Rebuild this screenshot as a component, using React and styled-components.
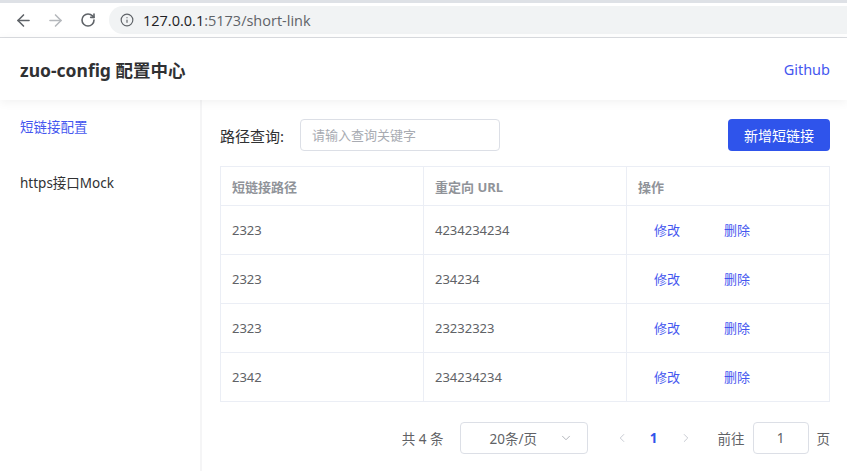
import React from "react";
import styled, { createGlobalStyle } from "styled-components";
import { ArrowLeft, ArrowRight, RotateCw, Info, ChevronDown, ChevronLeft, ChevronRight } from "lucide-react";

const Global = createGlobalStyle`
  html, body { margin: 0; padding: 0; background: #fff; overflow: hidden; }
  body { font-family: "Noto Sans", "Noto Sans CJK SC", sans-serif; }
  * { box-sizing: border-box; }
`;

const Page = styled.div`
  width: 847px;
  height: 471px;
  display: flex;
  flex-direction: column;
  overflow: hidden;
`;

const TopStrip = styled.div`
  height: 3px;
  background: #dee1e6;
`;

const Toolbar = styled.div`
  height: 35px;
  display: flex;
  align-items: center;
  padding-left: 13px;
  border-bottom: 1px solid #dadce0;
  background: #fff;
`;

const NavIcon = styled.span`
  width: 20px;
  display: flex;
  justify-content: center;
  margin-right: ${(p) => p.$gap || 12}px;
  color: ${(p) => (p.$disabled ? "#b5b8bc" : "#5f6368")};
`;

const Omnibox = styled.div`
  flex: 1;
  height: 28px;
  margin-left: 1px;
  border-radius: 14px 0 0 14px;
  background: #f1f3f4;
  display: flex;
  align-items: center;
  padding-left: 11px;
  gap: 9px;
  font-family: "Open Sans", "Noto Sans", sans-serif;
  font-size: 14.5px;
  color: #5f6368;
`;

const Host = styled.span`
  color: #202124;
`;

const Header = styled.header`
  height: 62px;
  display: flex;
  align-items: center;
  justify-content: space-between;
  padding: 0 17px 0 20px;
  background: #fff;
  position: relative;
  z-index: 1;
  box-shadow: 0 2px 10px rgba(0, 0, 0, 0.06);
`;

const Title = styled.h1`
  margin: 0;
  font-size: 17.5px;
  font-weight: 700;
  color: #303133;
`;

const Link = styled.a`
  color: #4557ef;
  font-size: 14.5px;
  text-decoration: none;
`;

const Body = styled.div`
  flex: 1;
  display: flex;
  min-height: 0;
`;

const Sidebar = styled.nav`
  width: 202px;
  border-right: 2px solid #f5f5f6;
  display: flex;
  flex-direction: column;
`;

const MenuItem = styled.div`
  height: 56px;
  line-height: 54px;
  padding-left: 20px;
  font-size: 13.5px;
  color: ${(p) => (p.$active ? "#4557ef" : "#303133")};
`;

const Main = styled.main`
  flex: 1;
  padding: 19px 17px 0 18px;
  display: flex;
  flex-direction: column;
`;

const SearchRow = styled.div`
  display: flex;
  align-items: center;
  height: 32px;
`;

const Label = styled.label`
  font-size: 15px;
  color: #303133;
  margin-right: 16px;
`;

const Input = styled.input`
  width: 200px;
  height: 32px;
  border: 1px solid #dcdfe6;
  border-radius: 4px;
  padding: 0 11px;
  font-size: 13px;
  font-family: inherit;
  outline: none;
  color: #606266;
  &::placeholder { color: #a8abb2; }
`;

const PrimaryButton = styled.button`
  margin-left: auto;
  height: 32px;
  width: 102px;
  border: none;
  border-radius: 4px;
  background: #2f54eb;
  color: #fff;
  font-size: 14px;
  font-family: inherit;
`;

const Table = styled.table`
  margin-top: 15px;
  width: 610px;
  border-collapse: collapse;
  table-layout: fixed;
  font-size: 13px;
`;

const Th = styled.th`
  height: 39px;
  text-align: left;
  padding: 0 11px;
  border: 1px solid #ebeef5;
  color: #909399;
  font-weight: 700;
`;

const Td = styled.td`
  height: 49px;
  padding: 0 11px 1px;
  border: 1px solid #ebeef5;
  color: #606266;
`;

const Actions = styled.div`
  display: flex;
  padding-left: 16px;
  gap: 44px;
`;

const ActionLink = styled.span`
  color: #4557ef;
  font-size: 13px;
`;

const Pager = styled.div`
  margin-top: 20px;
  display: flex;
  align-items: center;
  justify-content: flex-end;
  height: 32px;
  font-size: 13.5px;
  color: #606266;
`;

const Total = styled.span`
  margin-right: 16px;
`;

const Select = styled.div`
  width: 128px;
  height: 32px;
  border: 1px solid #dcdfe6;
  border-radius: 4px;
  display: flex;
  align-items: center;
  padding: 0 14px 0 29px;
  justify-content: space-between;
  color: #606266;
  margin-right: 18px;
`;

const PageArrow = styled.span`
  width: 32px;
  display: flex;
  justify-content: center;
  color: #c0c4cc;
`;

const PageNum = styled.span`
  width: 32px;
  text-align: center;
  font-weight: 700;
  color: #2f54eb;
`;

const JumpText = styled.span`
  margin-left: ${(p) => p.$ml || 0}px;
  margin-right: ${(p) => p.$mr || 0}px;
`;

const JumpInput = styled.div`
  width: 56px;
  height: 32px;
  border: 1px solid #dcdfe6;
  border-radius: 4px;
  display: flex;
  align-items: center;
  justify-content: center;
  color: #606266;
`;

const rows = [
  ["2323", "4234234234"],
  ["2323", "234234"],
  ["2323", "23232323"],
  ["2342", "234234234"],
];

export default function App() {
  return (
    <Page>
      <Global />
      <TopStrip />
      <Toolbar>
        <NavIcon $gap={12}><ArrowLeft size={19} strokeWidth={2} /></NavIcon>
        <NavIcon $gap={13} $disabled><ArrowRight size={19} strokeWidth={2} /></NavIcon>
        <NavIcon $gap={10}><RotateCw size={16} strokeWidth={2.4} /></NavIcon>
        <Omnibox>
          <Info size={14} strokeWidth={2} color="#5f6368" />
          <span><Host>127.0.0.1</Host>:5173/short-link</span>
        </Omnibox>
      </Toolbar>
      <Header>
        <Title>zuo-config 配置中心</Title>
        <Link>Github</Link>
      </Header>
      <Body>
        <Sidebar>
          <MenuItem $active>短链接配置</MenuItem>
          <MenuItem>https接口Mock</MenuItem>
        </Sidebar>
        <Main>
          <SearchRow>
            <Label>路径查询:</Label>
            <Input placeholder="请输入查询关键字" />
            <PrimaryButton>新增短链接</PrimaryButton>
          </SearchRow>
          <Table>
            <thead>
              <tr>
                <Th>短链接路径</Th>
                <Th>重定向 URL</Th>
                <Th>操作</Th>
              </tr>
            </thead>
            <tbody>
              {rows.map((r, i) => (
                <tr key={i}>
                  <Td>{r[0]}</Td>
                  <Td>{r[1]}</Td>
                  <Td>
                    <Actions>
                      <ActionLink>修改</ActionLink>
                      <ActionLink>删除</ActionLink>
                    </Actions>
                  </Td>
                </tr>
              ))}
            </tbody>
          </Table>
          <Pager>
            <Total>共 4 条</Total>
            <Select>
              <span>20条/页</span>
              <ChevronDown size={14} color="#a8abb2" strokeWidth={1.5} />
            </Select>
            <PageArrow><ChevronLeft size={14} strokeWidth={1.5} /></PageArrow>
            <PageNum>1</PageNum>
            <PageArrow><ChevronRight size={14} strokeWidth={1.5} /></PageArrow>
            <JumpText $ml={16} $mr={8}>前往</JumpText>
            <JumpInput>1</JumpInput>
            <JumpText $ml={8}>页</JumpText>
          </Pager>
        </Main>
      </Body>
    </Page>
  );
}
